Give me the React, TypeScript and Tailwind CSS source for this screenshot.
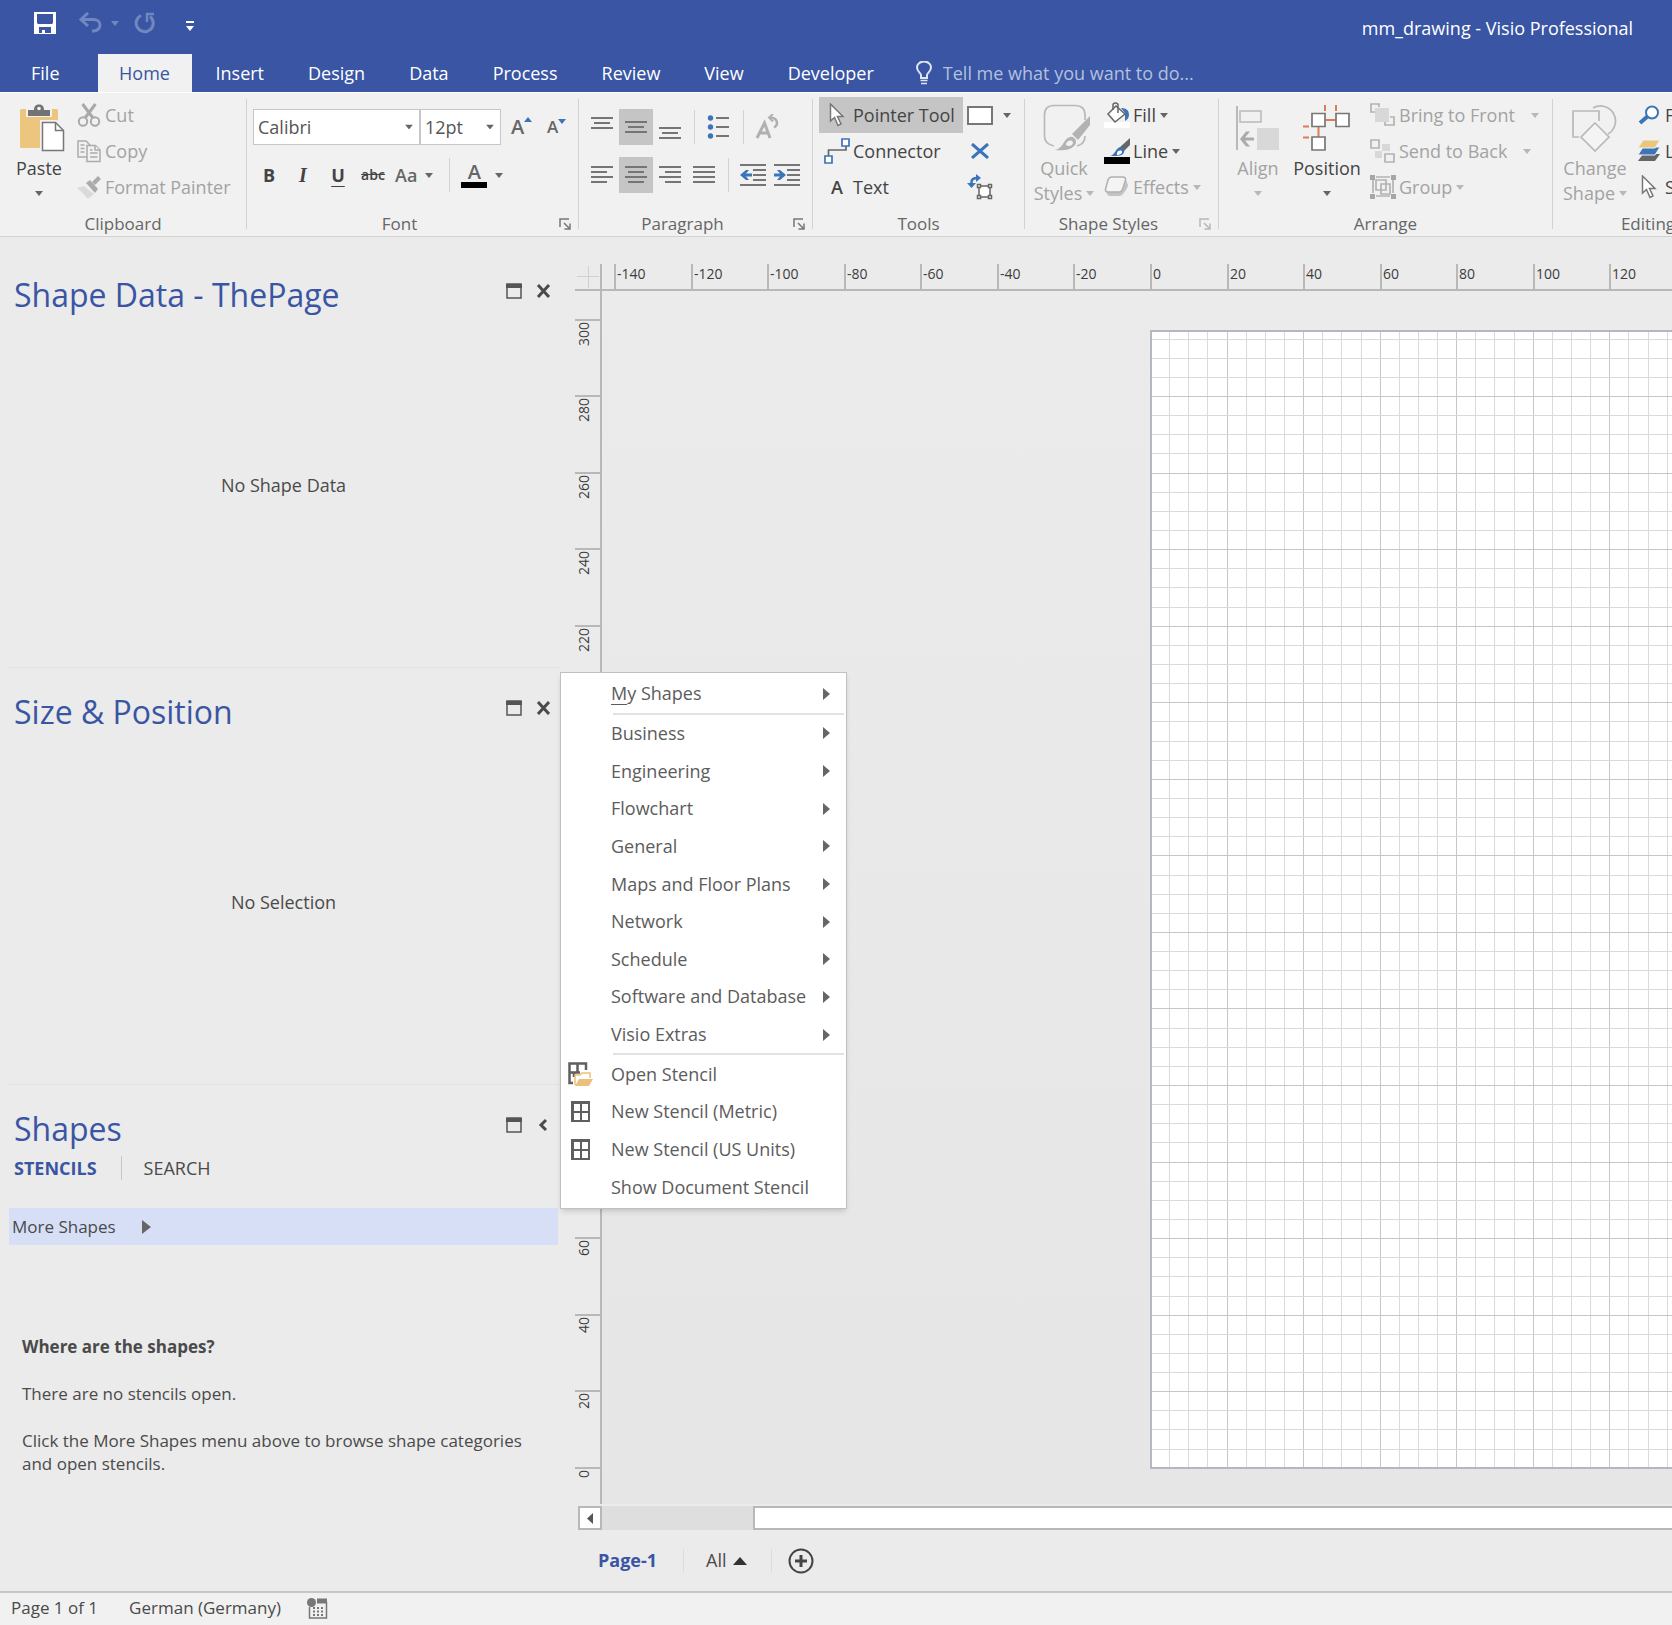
import type { ReactNode } from 'react';
import clsx from 'clsx';

const TABS = ['Insert', 'Design', 'Data', 'Process', 'Review', 'View', 'Developer'];

const CATEGORIES = [
  'Business',
  'Engineering',
  'Flowchart',
  'General',
  'Maps and Floor Plans',
  'Network',
  'Schedule',
  'Software and Database',
  'Visio Extras',
];

// Drawing scale and the origin of the sheet inside the canvas
const PX_PER_MM = 3.8275;
const PAGE_X = 548;
const PAGE_Y = 40;
const PAGE_W = 420;
const PAGE_H = 297;
const ZERO_Y = PAGE_Y + PAGE_H * PX_PER_MM;

const range = (from: number, to: number, step: number) => {
  const out: number[] = [];
  for (let v = from; v <= to; v += step) out.push(v);
  return out;
};

/* ---------- icons ---------- */

function Caret({ className = 'fill-[#666]' }: { className?: string }) {
  return (
    <svg width="8" height="5" viewBox="0 0 8 5" className={clsx('shrink-0', className)}>
      <path d="M0 0h8L4 5z" />
    </svg>
  );
}

function SaveIcon() {
  return (
    <svg width="22" height="22" viewBox="0 0 22 22">
      <path fill="#fff" fillRule="evenodd" d="M0 0h22v22H0zM3 2v9l1 1h14l1-1V2zM5 15v6h3v-3h3v3h6v-6z" />
    </svg>
  );
}

function UndoIcon() {
  return (
    <svg width="24" height="22" viewBox="0 0 24 22" fill="none" stroke="#7187c0" strokeWidth="3">
      <path d="M9 1 2 7.500 9 14M2 7.500h12.500c4 0 6.500 2.500 6.500 5.500s-2.500 6-6.500 6H13" />
    </svg>
  );
}

function RedoIcon() {
  return (
    <svg width="22" height="22" viewBox="0 0 22 22" fill="none" stroke="#7187c0" strokeWidth="3">
      <path d="M7 3.500a8.500 8.500 0 1 0 9 1" />
      <path d="M20 2h-7v8" strokeWidth="2.500" />
    </svg>
  );
}

function BulbIcon() {
  return (
    <svg width="16" height="24" viewBox="0 0 16 24" fill="none" stroke="#dfe5f3" strokeWidth="2">
      <path d="M5 17v-3c0-2-4-3.500-4-7.500a7 6 0 0 1 14 0c0 4-4 5.500-4 7.500v3z" />
      <path d="M4.500 19.500h7M5 22.500h6" strokeWidth="1.500" />
    </svg>
  );
}

function PasteIcon() {
  return (
    <svg width="54" height="48" viewBox="-8 0 54 48">
      <rect x="0" y="5" width="38" height="39" rx="1.500" fill="#ecc67e" />
      <path d="M6 4h26v9H6z" fill="#f1f1f1" />
      <path d="M8 6h6c0-4 2-5.500 5-5.500S24 2 24 6h6v6H8z" fill="#737373" />
      <circle cx="19" cy="4.500" r="1.800" fill="#f1f1f1" />
      <path d="M20 16h17l9 9v22H20z" fill="#f1f1f1" />
      <path d="M22.500 18.500h13l8 8v20h-21z" fill="#fff" stroke="#777" strokeWidth="1.500" />
      <path d="M35.500 18.500v8h8" fill="none" stroke="#777" strokeWidth="1.500" />
    </svg>
  );
}

function CutIcon() {
  return (
    <svg width="24" height="24" viewBox="0 0 24 24" fill="none" stroke="#a9a9a9">
      <circle cx="6" cy="18.500" r="4.200" strokeWidth="2" />
      <circle cx="18" cy="18.500" r="4.200" strokeWidth="2" />
      <path d="M5.500 1 16 15M18.500 1 8 15" strokeWidth="3" />
    </svg>
  );
}

function CopyIcon() {
  return (
    <svg width="24" height="24" viewBox="0 0 24 24" fill="#f1f1f1" stroke="#ababab" strokeWidth="1.500">
      <path d="M1 2h8l4 4v12H1z" />
      <path d="M3.500 6h4M3.500 9.500h4M3.500 13h4" />
      <path d="M10 6.500h8.500l4.500 4.500v11.500H10z" />
      <path d="M18 6.500V11h5M13 14h7.500M13 18h7.500M13 11h2.500" />
    </svg>
  );
}

function PainterIcon() {
  return (
    <svg width="24" height="24" viewBox="0 0 24 24">
      <path d="m0 13 7-2 10 8-6 5C8 21 5 17 0 13z" fill="#dadada" />
      <path d="m9 8 4-3 8 9-3 4z" fill="#ababab" />
      <path d="m15 7 6-6 3 3-6 6z" fill="#ababab" />
    </svg>
  );
}

/** Stack of text lines; each entry is [x, y, width] inside a 24px box. */
function LinesIcon({ lines }: { lines: number[][] }) {
  return (
    <svg width="24" height="24" viewBox="0 0 24 24" fill="#757575" shapeRendering="crispEdges">
      {lines.map(([x, y, w]) => (
        <rect key={y} x={x} y={y} width={w} height="2" />
      ))}
    </svg>
  );
}

function BulletsIcon() {
  return (
    <svg width="24" height="26" viewBox="0 0 24 26" fill="#757575">
      {[4, 13, 22].map((y) => (
        <g key={y}>
          <circle cx="3.500" cy={y} r="2.700" fill="#3c74b8" />
          <path d={`M9 ${y - 1}h13v2H9z`} />
        </g>
      ))}
    </svg>
  );
}

function RotateTextIcon() {
  return (
    <svg width="26" height="26" viewBox="0 0 26 26" fill="none" stroke="#b0b0b0">
      <path d="M2 24 9.500 9 15 24M5 19h9" strokeWidth="3" />
      <path d="M14 3.500c5 0 8 2 8 5.500 0 2-1 3.500-3 4.500" strokeWidth="2.500" />
      <path d="m18 0-4 3.500 4 4" strokeWidth="2" />
    </svg>
  );
}

function IndentIcon({ right = false }: { right?: boolean }) {
  return (
    <svg width="26" height="24" viewBox="0 0 26 24" fill="#757575">
      <path d="M0 1h26v2H0zM13 6h13v2H13zM13 11h13v2H13zM13 16h13v2H13zM0 21h26v2H0z" />
      <path
        d={right ? 'M0 10.500h6L3 7h3l6 5-6 5H3l3-3.500H0z' : 'M12 10.500H6L9 7H6l-6 5 6 5h3l-3-3.500h6z'}
        fill="#3c74b8"
      />
    </svg>
  );
}

function LauncherIcon({ muted = false }: { muted?: boolean }) {
  return (
    <svg width="12" height="12" viewBox="0 0 12 12" fill="none" stroke={muted ? '#b8b8b8' : '#777'} strokeWidth="1.500">
      <path d="M1 9V1h9M5 5l5 5M11 5.500V11H5.500" />
    </svg>
  );
}

function PointerIcon() {
  return (
    <svg width="16" height="24" viewBox="0 0 16 24">
      <path d="M1.500 1v17l4-3.500 3.500 8 3-1.500-3.500-7.500H14z" fill="#fff" stroke="#777" strokeWidth="1.500" />
    </svg>
  );
}

function ConnectorIcon() {
  return (
    <svg width="26" height="26" viewBox="0 0 26 26" fill="#fff" stroke="#3c74b8" strokeWidth="1.700">
      <path d="M4.500 18v-6H22V8" fill="none" stroke="#666" />
      <path d="M18 1h7v7h-7zM1 18h7v7H1z" />
    </svg>
  );
}

function CrossIcon() {
  return (
    <svg width="20" height="16" viewBox="0 0 20 16" stroke="#3c74b8" strokeWidth="3">
      <path d="m2 1 16 14M18 1 2 15" />
    </svg>
  );
}

function ConnectionPointIcon() {
  return (
    <svg width="26" height="26" viewBox="0 0 26 26" fill="none">
      <path d="M4.500 12V8q0-4 6-4" stroke="#3c74b8" strokeWidth="2.500" />
      <path d="M9 0v8l5-4zM0 9h9l-4.500 5z" fill="#3c74b8" />
      <path d="M12 12h11v11H12z" fill="#fff" stroke="#666" strokeWidth="1.500" />
      <path d="M10.500 10.500h3v3h-3zM21.500 10.500h3v3h-3zM10.500 21.500h3v3h-3zM21.500 21.500h3v3h-3z" fill="#fff" stroke="#666" strokeWidth="1.500" />
    </svg>
  );
}

function QuickStylesIcon() {
  return (
    <svg width="54" height="48" viewBox="-6 0 54 48" fill="none">
      <path d="M11 42Q1.500 40 1.500 32V11Q1.500 1.500 11 1.500h21Q42 1.500 42 11v5M42 32q0 8-8 10" stroke="#b9b9b9" strokeWidth="1.700" />
      <path d="M47 12v9L35 36l-6-6z" fill="#b3b3b3" />
      <path d="M12 46c8-1 8-11 15-13 4-1 8 4 5 8-4 5-12 6-20 5z" fill="#b3b3b3" />
      <path d="M23 41c0-5 7-6 7-2-1 3-4 4-7 2z" fill="#f1f1f1" />
    </svg>
  );
}

function FillIcon() {
  return (
    <svg width="26" height="26" viewBox="0 0 26 26">
      <path d="M0 20h26v6H0z" fill="#fff" />
      <path d="M17 6c5 0 8 2 8 7 0 3-2 5-4 6V11z" fill="#3c74b8" />
      <path d="m12 4 9 8-10 8-7-8z" fill="#fff" stroke="#666" strokeWidth="1.500" />
      <path d="M9 8V3q0-2 2.500-2T14 3v8" fill="none" stroke="#666" strokeWidth="1.500" />
    </svg>
  );
}

function LineIcon() {
  return (
    <svg width="26" height="26" viewBox="0 0 26 26">
      <path d="M26 0v7l-7 7-4-4z" fill="#666" />
      <path d="M6 18c5-1 5-7 10-9 3 0 6 4 3 7-2 2-7 2-13 2z" fill="#3c74b8" />
      <path d="M13 15c1-3 5-3 5-1s-3 3-5 3z" fill="#fff" />
      <path d="M0 19h26v7H0z" fill="#000" />
    </svg>
  );
}

function EffectsIcon() {
  return (
    <svg width="26" height="24" viewBox="0 0 26 24">
      <path d="M2 16 19 14l3-9 2 5q0 3-5 9-1 2-4 2H6q-3 0-4-5z" fill="#c4c4c4" />
      <path d="M8 2h11q3 0 2.500 3L19 13q-1 4-4 4H4q-3 0-2.500-3L4 5q1-3 4-3z" fill="#f4f4f4" stroke="#b0b0b0" strokeWidth="1.500" />
    </svg>
  );
}

function AlignIcon() {
  return (
    <svg width="44" height="46" viewBox="0 0 44 46" fill="none">
      <path d="M1 1v44" stroke="#b9b9b9" strokeWidth="2" />
      <path d="M4 6h21v11H4z" stroke="#b9b9b9" strokeWidth="1.500" />
      <path d="M21 23h22v22H21z" fill="#d8d8d8" />
      <path d="M18 32.500h-9l5-6h-4l-6 7.500 6 7.500h4l-5-6h9z" fill="#ababab" />
    </svg>
  );
}

function PositionIcon() {
  return (
    <svg width="48" height="46" viewBox="0 0 48 46" fill="#fff" stroke="#777" strokeWidth="1.700">
      <path d="M23 15h10M15.500 22v10M22 0v6M33 0v6M0 21.500h6M0 32.500h6" stroke="#e07b56" strokeWidth="2" />
      <path d="M9 8.500h13v13H9zM33 8.500h13v13H33zM9 32h13v13H9z" />
    </svg>
  );
}

function BringFrontIcon() {
  return (
    <svg width="26" height="26" viewBox="0 0 26 26" fill="none" stroke="#b3b3b3" strokeWidth="1.700">
      <path d="M5 6h14v14H5z" fill="#d8d8d8" stroke="none" />
      <path d="M5 10H1V2h8v3M20 15h4v8h-9v-3" />
    </svg>
  );
}

function SendBackIcon() {
  return (
    <svg width="26" height="26" viewBox="0 0 26 26" fill="#f1f1f1" stroke="#b3b3b3" strokeWidth="1.700">
      <path d="M12 6h8v7h-8zM5 13h7v7H5z" fill="#d8d8d8" stroke="none" />
      <path d="M1 2h8v8H1zM15 16h9v8h-9z" />
    </svg>
  );
}

function GroupIcon() {
  return (
    <svg width="26" height="26" viewBox="0 0 26 26" fill="none" stroke="#b3b3b3" strokeWidth="1.700">
      <path d="M6 3h14M6 22h14M3 6v13M23 6v13M6 6h10v10H6zM11 10h9v10h-9z" />
      <path d="M0 1h5v5H0zM21 1h5v5h-5zM0 20h5v5H0zM21 20h5v5h-5z" fill="#a6a6a6" stroke="none" />
    </svg>
  );
}

function ChangeShapeIcon() {
  return (
    <svg width="46" height="48" viewBox="0 0 46 48" fill="none" stroke="#b9b9b9" strokeWidth="1.700">
      <path d="M7 33H1V7h26v10" />
      <path d="M21 4a15 15 0 1 1 15 26" />
      <path d="m23 19 14 14-14 14L9 33z" fill="#f4f4f4" />
    </svg>
  );
}

function FindIcon() {
  return (
    <svg width="22" height="20" viewBox="0 0 22 20" fill="#fff" stroke="#3c74b8">
      <path d="m10 11-8 7" strokeWidth="4" />
      <circle cx="14" cy="7.500" r="6" strokeWidth="2" />
    </svg>
  );
}

function LayersIcon() {
  return (
    <svg width="24" height="22" viewBox="0 0 24 22">
      <path d="M6 14h17l-5 7H1z" fill="#666" />
      <path d="M6 7h17l-5 8H1z" fill="#3c74b8" stroke="#f1f1f1" />
      <path d="M6 0h17l-5 8H1z" fill="#ecc67e" stroke="#f1f1f1" />
    </svg>
  );
}

function StencilIcon() {
  return (
    <svg width="19" height="21" viewBox="0 0 19 21" fill="none" stroke="#5f5f5f" shapeRendering="crispEdges">
      <path d="M1 1h17v19H1z" strokeWidth="3" />
      <path d="M9.500 1v19M1 10.500h17" strokeWidth="2" />
    </svg>
  );
}

function OpenStencilIcon() {
  return (
    <svg width="25" height="25" viewBox="0 0 25 25" fill="none" stroke="#5f5f5f">
      <path d="M5 21H1.500V1.500H18V8M9.500 1v9M1 10.500h11M6 15v-4" strokeWidth="2.500" />
      <path d="M7 23V13h5l2-2h8v5" fill="#fff" stroke="#ecc07a" strokeWidth="1.500" />
      <path d="m7 24 4-7h14l-4 7z" fill="#ecc07a" stroke="none" />
    </svg>
  );
}

/* ---------- ribbon pieces ---------- */

interface RibbonGroupProps {
  label: string;
  className: string;
  launcher?: 'on' | 'muted';
  children: ReactNode;
}

function RibbonGroup({ label, className, launcher, children }: RibbonGroupProps) {
  return (
    <>
      <section aria-label={label} className={clsx('flex shrink-0 flex-col pt-1', className)}>
        <div className="flex h-[114px]">{children}</div>
        <div className="flex h-[25px] items-center text-[17px] text-[#666]">
          <span className="flex-1 text-center">{label}</span>
          {launcher && (
            <button aria-label={`${label} options`} className="w-[26px] pl-[7px]">
              <LauncherIcon muted={launcher === 'muted'} />
            </button>
          )}
        </div>
      </section>
      <div className="mt-[6px] mb-[7px] w-px shrink-0 bg-[#d2d2d2]" />
    </>
  );
}

interface RibbonItemProps {
  icon: ReactNode;
  label: string;
  muted?: boolean;
  active?: boolean;
  caret?: boolean;
  wideCaret?: boolean;
}

function RibbonItem({ icon, label, muted, active, caret, wideCaret }: RibbonItemProps) {
  return (
    <button
      className={clsx(
        'flex h-9 items-center whitespace-nowrap pl-[5px]',
        muted ? 'text-[#a3a3a3]' : 'text-[#444]',
        active && 'bg-[#c5c5c5]'
      )}
    >
      <span className="mr-[3px] flex w-[26px] justify-center">{icon}</span>
      {label}
      {caret && (
        <span className={wideCaret ? 'ml-4' : 'ml-1'}>
          <Caret className={muted ? 'fill-[#b8b8b8]' : 'fill-[#666]'} />
        </span>
      )}
    </button>
  );
}

interface BigButtonProps {
  icon: ReactNode;
  lines: string[];
  className: string;
  muted?: boolean;
}

function BigButton({ icon, lines, className, muted }: BigButtonProps) {
  const caret = <Caret className={muted ? 'fill-[#b8b8b8]' : 'fill-[#666]'} />;
  return (
    <button
      className={clsx(
        'flex shrink-0 flex-col items-center pt-[7px] leading-[25px]',
        muted ? 'text-[#a3a3a3]' : 'text-[#444]',
        className
      )}
    >
      <span className="mb-1 flex h-12 items-center">{icon}</span>
      <span>{lines[0]}</span>
      <span className="flex h-[25px] items-center gap-1">
        {lines[1]}
        {caret}
      </span>
    </button>
  );
}

function ToolButton({ label, active, children }: { label: string; active?: boolean; children: ReactNode }) {
  return (
    <button
      aria-label={label}
      className={clsx('flex h-9 w-[34px] shrink-0 items-center justify-center', active && 'bg-[#c5c5c5]')}
    >
      {children}
    </button>
  );
}

function Divider() {
  return <div className="mx-[7px] h-[34px] w-px bg-[#d2d2d2]" />;
}

function Combo({ label, value, className }: { label: string; value: string; className: string }) {
  return (
    <div className={clsx('relative h-9', className)}>
      <select
        aria-label={label}
        defaultValue={value}
        className="h-full w-full appearance-none border border-[#c6c6c6] bg-white pl-1 text-[#555] outline-none"
      >
        <option>{value}</option>
      </select>
      <span className="pointer-events-none absolute top-1/2 right-[7px] -translate-y-1/2">
        <Caret className="block fill-[#666]" />
      </span>
    </div>
  );
}

function Ribbon() {
  return (
    <div className="flex h-[145px] overflow-hidden border-t border-b border-t-white border-b-[#d2d2d2] bg-[#f1f1f1]">
      <RibbonGroup label="Clipboard" className="w-[246px]">
        <BigButton icon={<PasteIcon />} lines={['Paste']} className="w-[71px] pl-[7px]" />
        <div>
          <RibbonItem icon={<CutIcon />} label="Cut" muted />
          <RibbonItem icon={<CopyIcon />} label="Copy" muted />
          <RibbonItem icon={<PainterIcon />} label="Format Painter" muted />
        </div>
      </RibbonGroup>

      <RibbonGroup label="Font" className="w-[331px]" launcher="on">
        <div className="flex flex-col gap-3 pt-3 pl-[6px]">
          <div className="flex items-center">
            <Combo label="Font" value="Calibri" className="w-[167px]" />
            <Combo label="Font size" value="12pt" className="w-[81px]" />
            <button aria-label="Increase font size" className="ml-[10px] flex w-7 text-xl font-semibold text-[#666]">
              A<Caret className="mt-1 rotate-180 fill-[#3c74b8]" />
            </button>
            <button aria-label="Decrease font size" className="ml-2 flex w-7 items-end text-[17px] font-semibold text-[#666]">
              A<Caret className="mb-4 fill-[#3c74b8]" />
            </button>
          </div>
          <div className="flex h-9 items-center text-[#444]">
            <button className="w-8 font-bold">B</button>
            <button className="w-9 font-['Liberation_Serif',serif] text-xl font-bold italic">I</button>
            <button className="w-[34px] font-bold underline underline-offset-4">U</button>
            <button className="w-9 text-sm font-semibold line-through">abc</button>
            <button className="flex items-center gap-2 pl-1 font-semibold text-[#666]">
              Aa
              <Caret />
            </button>
            <div className="mr-[11px] ml-4 h-[34px] w-px bg-[#d2d2d2]" />
            <button aria-label="Font color" className="flex items-center gap-2">
              <span className="w-[26px] border-b-[6px] border-black text-center text-xl leading-5 font-semibold text-[#666]">A</span>
              <Caret />
            </button>
          </div>
        </div>
      </RibbonGroup>

      <RibbonGroup label="Paragraph" className="w-[233px]" launcher="on">
        <div className="flex flex-col gap-3 pt-3 pl-[6px]">
          <div className="flex items-center">
            <ToolButton label="Align top">
              <LinesIcon lines={[[1, 2, 22], [4, 7, 16], [1, 12, 22]]} />
            </ToolButton>
            <ToolButton label="Align middle" active>
              <LinesIcon lines={[[1, 6, 22], [4, 11, 16], [1, 16, 22]]} />
            </ToolButton>
            <ToolButton label="Align bottom">
              <LinesIcon lines={[[1, 12, 22], [4, 17, 16], [1, 22, 22]]} />
            </ToolButton>
            <Divider />
            <ToolButton label="Bullets">
              <BulletsIcon />
            </ToolButton>
            <Divider />
            <ToolButton label="Rotate text">
              <RotateTextIcon />
            </ToolButton>
          </div>
          <div className="flex items-center">
            <ToolButton label="Align left">
              <LinesIcon lines={[[1, 3, 22], [1, 8, 16], [1, 13, 22], [1, 18, 16]]} />
            </ToolButton>
            <ToolButton label="Center" active>
              <LinesIcon lines={[[1, 3, 22], [4, 8, 16], [1, 13, 22], [4, 18, 16]]} />
            </ToolButton>
            <ToolButton label="Align right">
              <LinesIcon lines={[[1, 3, 22], [7, 8, 16], [1, 13, 22], [7, 18, 16]]} />
            </ToolButton>
            <ToolButton label="Justify">
              <LinesIcon lines={[[1, 3, 22], [1, 8, 22], [1, 13, 22], [1, 18, 22]]} />
            </ToolButton>
            <Divider />
            <ToolButton label="Decrease indent">
              <IndentIcon />
            </ToolButton>
            <ToolButton label="Increase indent">
              <IndentIcon right />
            </ToolButton>
          </div>
        </div>
      </RibbonGroup>

      <RibbonGroup label="Tools" className="w-[211px]">
        <div className="ml-[6px] flex w-36 shrink-0 flex-col">
          <RibbonItem icon={<PointerIcon />} label="Pointer Tool" active />
          <RibbonItem icon={<ConnectorIcon />} label="Connector" />
          <RibbonItem icon={<span className="font-semibold">A</span>} label="Text" />
        </div>
        <div className="flex flex-col">
          <button aria-label="Rectangle" className="flex h-9 items-center gap-[10px] pl-1">
            <span className="h-[19px] w-[26px] border-2 border-[#777] bg-white" />
            <Caret />
          </button>
          <ToolButton label="Delete connection">
            <CrossIcon />
          </ToolButton>
          <ToolButton label="Connection point">
            <ConnectionPointIcon />
          </ToolButton>
        </div>
      </RibbonGroup>

      <RibbonGroup label="Shape Styles" className="w-[193px]" launcher="muted">
        <BigButton icon={<QuickStylesIcon />} lines={['Quick', 'Styles']} className="w-[74px] pl-1" muted />
        <div>
          <RibbonItem icon={<FillIcon />} label="Fill" caret />
          <RibbonItem icon={<LineIcon />} label="Line" caret />
          <RibbonItem icon={<EffectsIcon />} label="Effects" caret muted />
        </div>
      </RibbonGroup>

      <RibbonGroup label="Arrange" className="w-[333px]">
        <BigButton icon={<AlignIcon />} lines={['Align']} className="w-[74px] pl-1" muted />
        <BigButton icon={<PositionIcon />} lines={['Position']} className="w-[72px] pr-1" />
        <div>
          <RibbonItem icon={<BringFrontIcon />} label="Bring to Front" caret wideCaret muted />
          <RibbonItem icon={<SendBackIcon />} label="Send to Back" caret wideCaret muted />
          <RibbonItem icon={<GroupIcon />} label="Group" caret muted />
        </div>
      </RibbonGroup>

      <RibbonGroup label="Editing" className="w-[190px]">
        <BigButton icon={<ChangeShapeIcon />} lines={['Change', 'Shape']} className="w-[78px] pl-1.5" muted />
        <div>
          <RibbonItem icon={<FindIcon />} label="Find" caret />
          <RibbonItem icon={<LayersIcon />} label="Layers" caret />
          <RibbonItem icon={<PointerIcon />} label="Select" caret />
        </div>
      </RibbonGroup>
    </div>
  );
}

/* ---------- side panels ---------- */

function PanelHeader({ title, collapse }: { title: string; collapse?: boolean }) {
  return (
    <header className="flex h-10 items-start justify-between pr-[24px] pl-[14px]">
      <h2 className="text-[32px] leading-10 text-[#3955a3]">{title}</h2>
      <div className="flex gap-[14px] pt-2">
        <button aria-label={`Maximize ${title}`}>
          <svg width="16" height="16" viewBox="0 0 16 16" fill="none" stroke="#555">
            <path d="M1 1h14v14H1z" strokeWidth="1.500" />
            <path d="M0 3h16" strokeWidth="4" />
          </svg>
        </button>
        <button aria-label={`${collapse ? 'Collapse' : 'Close'} ${title}`}>
          <svg width="15" height="16" viewBox="0 0 15 16" fill="none" stroke="#4a4a4a" strokeWidth="3">
            <path d={collapse ? 'm10 3-5 5 5 5' : 'm2 2 11 12M13 2 2 14'} />
          </svg>
        </button>
      </div>
    </header>
  );
}

function EmptyPanel({ title, message }: { title: string; message: string }) {
  return (
    <section className="flex h-[417px] flex-col pt-[25px]">
      <PanelHeader title={title} />
      <p className="flex flex-1 items-center justify-center pr-2 pb-3">{message}</p>
    </section>
  );
}

interface MenuItemProps {
  icon?: ReactNode;
  submenu?: boolean;
  children: ReactNode;
}

function MenuItem({ icon, submenu, children }: MenuItemProps) {
  return (
    <button role="menuitem" className="flex flex-1 items-center pr-4">
      <span className="flex w-[50px] justify-center pr-3">{icon}</span>
      <span className="flex-1 text-left whitespace-nowrap">{children}</span>
      {submenu && (
        <svg width="7" height="12" viewBox="0 0 7 12" fill="#666">
          <path d="M0 0v12l7-6z" />
        </svg>
      )}
    </button>
  );
}

function ShapesMenu() {
  return (
    <div
      role="menu"
      className="absolute bottom-full left-full z-10 -mb-px ml-0.5 flex h-[537px] w-[287px] flex-col border border-[#c0c0c0] bg-white py-0.5 text-[#5c5c5c] shadow-md"
    >
      <MenuItem submenu>
        <span className="underline underline-offset-4">M</span>y Shapes
      </MenuItem>
      <hr className="mr-0.5 ml-[52px] h-0.5 border-0 bg-[#e2e2e2]" />
      {CATEGORIES.map((name) => (
        <MenuItem key={name} submenu>
          {name}
        </MenuItem>
      ))}
      <hr className="mr-0.5 ml-[52px] h-0.5 border-0 bg-[#e2e2e2]" />
      <MenuItem icon={<OpenStencilIcon />}>Open Stencil</MenuItem>
      <MenuItem icon={<StencilIcon />}>New Stencil (Metric)</MenuItem>
      <MenuItem icon={<StencilIcon />}>New Stencil (US Units)</MenuItem>
      <MenuItem>Show Document Stencil</MenuItem>
    </div>
  );
}

function SidePanels() {
  return (
    <aside className="w-[575px] shrink-0 pt-[13px] text-[#4a4a4a]">
      <EmptyPanel title="Shape Data - ThePage" message="No Shape Data" />
      <hr className="mr-4 -mb-px ml-2 border-[#e3e3e3]" />
      <EmptyPanel title="Size & Position" message="No Selection" />
      <hr className="mr-4 -mb-px ml-2 border-[#e3e3e3]" />
      <section className="pt-[25px]">
        <PanelHeader title="Shapes" collapse />
        <div className="flex h-[38px] items-center pl-[14px]">
          <button className="font-bold text-[#3955a3]">STENCILS</button>
          <div className="mr-[22px] ml-6 h-6 w-px bg-[#c6c6c6]" />
          <button>SEARCH</button>
        </div>
        <div className="relative mt-[21px] mr-[17px] ml-[9px]">
          <button className="flex h-[37px] w-full items-center gap-[26px] bg-[#d6dff6] pt-px pl-[3px] text-[17px]">
            More Shapes
            <svg width="9" height="14" viewBox="0 0 9 14" fill="#666">
              <path d="M0 0v14l9-7z" />
            </svg>
          </button>
          <ShapesMenu />
        </div>
        <div className="flex flex-col gap-6 pt-[90px] pr-6 pl-[22px] text-[17px] leading-[23px]">
          <p className="font-bold">Where are the shapes?</p>
          <p>There are no stencils open.</p>
          <p>Click the More Shapes menu above to browse shape categories and open stencils.</p>
        </div>
      </section>
    </aside>
  );
}

/* ---------- drawing area ---------- */

function HorizontalRuler() {
  return (
    <svg className="h-[27px] w-full" fill="#3c3c3c" fontSize="14">
      {range(-140, 120, 20).map((mm) => {
        const x = Math.round(PAGE_X + mm * PX_PER_MM);
        return (
          <g key={mm}>
            <rect x={x} y="0" width="2" height="26" fill="#b8b8b8" />
            <text x={x + 3} y="15">
              {mm}
            </text>
          </g>
        );
      })}
      <rect y="25" width="100%" height="2" fill="#b8b8b8" />
    </svg>
  );
}

function VerticalRuler() {
  return (
    <svg className="h-full w-full" fill="#3c3c3c" fontSize="14">
      {range(0, 300, 20).map((mm) => {
        const y = Math.round(ZERO_Y - mm * PX_PER_MM);
        return (
          <g key={mm}>
            <rect x="0" y={y - 1} width="26" height="2" fill="#b8b8b8" />
            <text transform={`translate(14 ${y + 2}) rotate(-90)`} textAnchor="end">
              {mm}
            </text>
          </g>
        );
      })}
      <rect x="25" width="2" height="100%" fill="#b8b8b8" />
    </svg>
  );
}

function DrawingPage() {
  const w = PAGE_W * PX_PER_MM;
  const h = PAGE_H * PX_PER_MM;
  return (
    <svg className="h-full w-full bg-gradient-to-b from-[#ebebeb] to-[#e6e6e6]" shapeRendering="crispEdges">
      <rect x={PAGE_X} y={PAGE_Y} width={w} height={h} fill="#fff" />
      {range(5, PAGE_W - 5, 5).map((mm) => (
        <rect
          key={`v${mm}`}
          x={Math.round(PAGE_X + mm * PX_PER_MM)}
          y={PAGE_Y}
          width="1"
          height={h}
          fill={mm % 20 === 0 ? '#c6c6c6' : '#dadada'}
        />
      ))}
      {range(5, PAGE_H, 5).map((mm) => (
        <rect
          key={`h${mm}`}
          x={PAGE_X}
          y={Math.round(ZERO_Y - mm * PX_PER_MM)}
          width={w}
          height="1"
          fill={mm % 20 === 0 ? '#c6c6c6' : '#dadada'}
        />
      ))}
      <rect x={PAGE_X + 1} y={PAGE_Y} width={w} height={h} fill="none" stroke="#b3b8c2" strokeWidth="2" />
    </svg>
  );
}

function DrawingArea() {
  return (
    <main className="flex min-w-0 flex-1 flex-col pt-[27px]">
      <div className="grid flex-1 grid-cols-[27px_minmax(0,1fr)] grid-rows-[27px_minmax(0,1fr)]">
        <svg width="27" height="27" viewBox="0 0 27 27" fill="#b8b8b8">
          <path d="M25 0h2v27h-2zM0 25h27v2H0z" />
          <path d="M13 2h1v22h-1zM2 12h22v1H2z" fill="#cfcfcf" />
        </svg>
        <HorizontalRuler />
        <VerticalRuler />
        <DrawingPage />
      </div>
      <div className="mt-0.5 ml-[3px] flex h-6 bg-[#dedede]">
        <button aria-label="Scroll left" className="flex w-6 items-center justify-center border-2 border-[#b8b8b8] bg-white">
          <svg width="6" height="11" viewBox="0 0 6 11" fill="#555">
            <path d="M6 0v11L0 5.500z" />
          </svg>
        </button>
        <div className="ml-[151px] flex-1 border-2 border-r-0 border-[#b8b8b8] bg-white" />
      </div>
      <div className="flex h-[61px] items-center pl-[23px]">
        <button className="font-bold text-[#3955a3]">Page-1</button>
        <div className="mr-[22px] ml-[26px] h-6 w-px bg-[#dcdcdc]" />
        <button className="flex items-center gap-1.5 text-[#4a4a4a]">
          All
          <svg width="14" height="8" viewBox="0 0 14 8" fill="#333">
            <path d="M7 0 0 8h14z" />
          </svg>
        </button>
        <div className="mr-4 ml-6 h-6 w-px bg-[#dcdcdc]" />
        <button aria-label="Insert page">
          <svg width="26" height="26" viewBox="0 0 26 26" fill="none" stroke="#444">
            <circle cx="13" cy="13" r="11.500" strokeWidth="2" />
            <path d="M13 7v12M7 13h12" strokeWidth="3" />
          </svg>
        </button>
      </div>
    </main>
  );
}

export default function App() {
  return (
    <div className="flex min-h-screen flex-col overflow-hidden bg-[#ebebeb] font-['Open_Sans',sans-serif] text-[18px]">
      <div className="bg-[#3955a3] text-white">
        <div className="flex h-[54px] items-center justify-between pr-[39px] pl-[34px]">
          <div className="flex items-center pb-2">
            <button aria-label="Save">
              <SaveIcon />
            </button>
            <button aria-label="Undo" className="ml-[23px] flex items-center gap-2">
              <UndoIcon />
              <Caret className="fill-[#7187c0]" />
            </button>
            <button aria-label="Repeat" className="ml-[15px]">
              <RedoIcon />
            </button>
            <button aria-label="Customize Quick Access Toolbar" className="ml-[30px] pt-1.5">
              <svg width="8" height="10" viewBox="0 0 8 10" fill="#fff">
                <path d="M0 0h8v2H0zM0 5h8l-4 5z" />
              </svg>
            </button>
          </div>
          <h1 className="pt-0.5">mm_drawing - Visio Professional</h1>
        </div>
        <nav className="flex h-[38px] items-center pl-[31px]">
          <button>File</button>
          <button className="mr-6 ml-[38px] h-full w-[94px] bg-[#f1f1f1] text-[#3955a3]">Home</button>
          <div className="flex gap-11">
            {TABS.map((tab) => (
              <button key={tab}>{tab}</button>
            ))}
          </div>
          <label className="ml-[42px] flex flex-1 items-center gap-[11px]">
            <BulbIcon />
            <input
              type="text"
              aria-label="Tell me what you want to do"
              placeholder="Tell me what you want to do..."
              className="w-[300px] bg-transparent outline-none placeholder:text-[#b4c0de]"
            />
          </label>
        </nav>
      </div>
      <Ribbon />
      <div className="flex flex-1">
        <SidePanels />
        <DrawingArea />
      </div>
      <footer className="flex h-[34px] items-center border-t-2 border-[#c6c6c6] bg-[#f1f1f1] pb-0.5 pl-[11px] text-[17px] text-[#4a4a4a]">
        <span>Page 1 of 1</span>
        <span className="ml-[31px]">German (Germany)</span>
        <button aria-label="Record macro" className="ml-[26px]">
          <svg width="21" height="21" viewBox="0 0 21 21" fill="none" stroke="#777">
            <path d="M2.500 9v11h17V4" strokeWidth="1.500" />
            <path d="M10 3h10" strokeWidth="5" />
            <path d="M6 10h11M6 13.500h11M6 17h11" strokeWidth="2" strokeDasharray="2 2" />
            <circle cx="4.500" cy="4.500" r="4.500" fill="#777" stroke="none" />
          </svg>
        </button>
      </footer>
    </div>
  );
}
